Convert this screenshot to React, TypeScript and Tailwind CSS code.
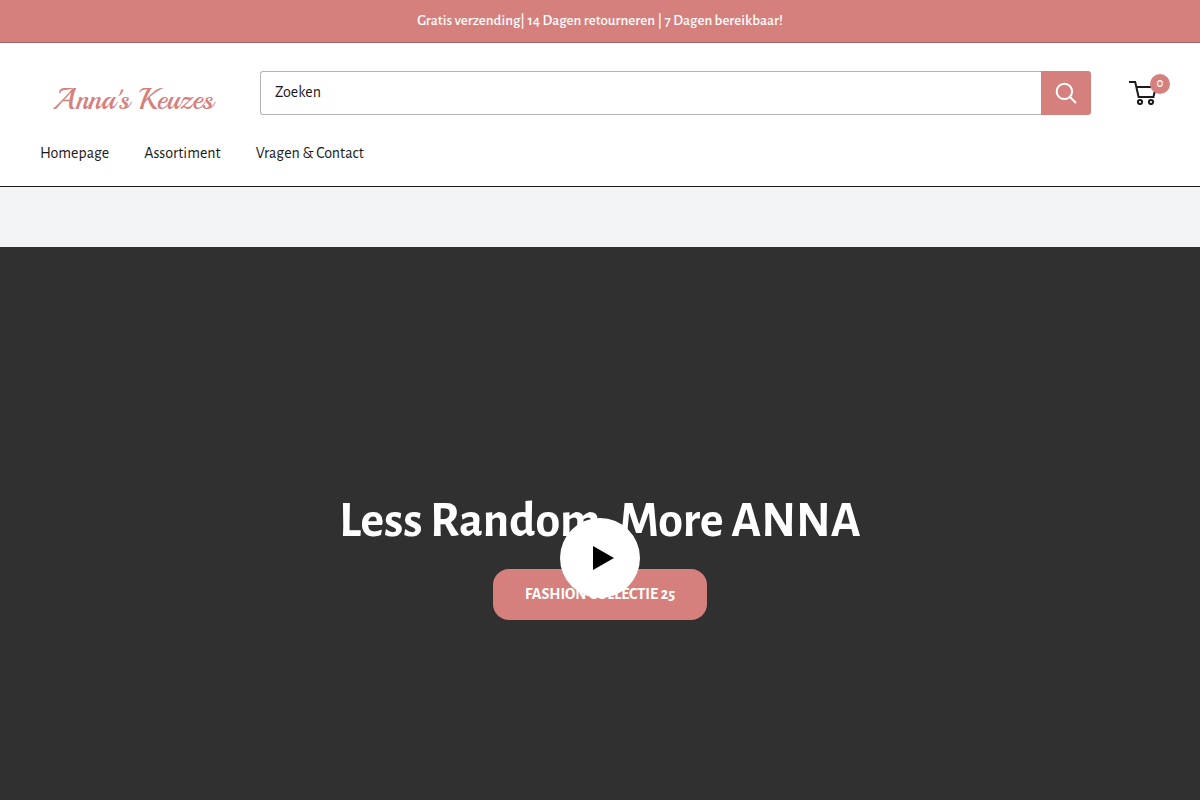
function SearchIcon() {
  return (
    <svg className="size-[22px]" viewBox="0 0 22 22" fill="none" stroke="currentColor" strokeWidth="2" aria-hidden="true">
      <circle cx="9.4" cy="9.4" r="7.7" />
      <path d="M14.9 14.9 L21 21" />
    </svg>
  );
}

function CartIcon() {
  return (
    <svg className="h-6 w-7" viewBox="0 0 28 24" fill="none" stroke="currentColor" strokeWidth="2" aria-hidden="true">
      <path d="M0 1 H6.2 L9.6 16 H24.4 L27 6 H7.5" />
      <circle cx="11" cy="21" r="2.1" />
      <circle cx="22" cy="21" r="2.1" />
    </svg>
  );
}

const links = ["Homepage", "Assortiment", "Vragen & Contact"];

export default function App() {
  return (
    <div className="min-h-screen bg-[#f3f4f6] font-['Alegreya_Sans',Lato,sans-serif] text-[#1c1b1b] oldstyle-nums proportional-nums">
      <div className="border-b border-[#a3636a] bg-[#d6807e] px-10 py-[10px] text-center text-[15px] leading-[22px] font-medium text-white">
        Gratis verzending| 14 Dagen retourneren | 7 Dagen bereikbaar!
      </div>

      <header className="border-b border-[#1c1b1b] bg-white px-10 pt-7 pb-[21px]">
        <div className="flex items-center">
          <a
            href="#"
            className="mr-10 flex h-11 w-[180px] shrink-0 items-end justify-center pl-[6px] font-['Playball','Liberation_Serif',serif] text-[29px] leading-[30px] whitespace-nowrap text-[#d6807e]"
          >
            Anna's Keuzes
          </a>
          <form role="search" className="flex h-11 min-w-0 grow" onSubmit={(e) => e.preventDefault()}>
            <input
              type="search"
              aria-label="Zoeken"
              placeholder="Zoeken"
              className="min-w-0 grow rounded-l-[3px] border border-r-0 border-[#b4b4b4] bg-white px-[14px] pb-[2px] text-base outline-none placeholder:text-[#1c1b1b]"
            />
            <button
              type="submit"
              aria-label="Zoeken"
              className="flex w-[50px] items-center justify-center rounded-r-[3px] bg-[#d6807e] text-white"
            >
              <SearchIcon />
            </button>
          </form>
          <a href="#" aria-label="Winkelwagen" className="relative ml-[38px] mr-[3px]">
            <CartIcon />
            <span className="absolute -top-[7px] left-[21px] flex size-5 items-center justify-center rounded-full bg-[#d6807e] text-[13px] leading-5 font-medium text-white">
              0
            </span>
          </a>
        </div>
        <nav className="mt-[26px] flex gap-[35px] text-base leading-6">
          {links.map((label) => (
            <a key={label} href="#">
              {label}
            </a>
          ))}
        </nav>
      </header>

      <section className="relative mt-[60px] flex min-h-[622px] flex-col items-center justify-center bg-[#303030] px-10 text-center text-white">
        <h1 className="text-[50px] leading-[48px] font-bold">Less Random, More ANNA</h1>
        <a
          href="#"
          className="mt-6 rounded-2xl bg-[#d6807e] px-8 text-base leading-[51px] font-bold"
        >
          FASHION COLLECTIE 25
        </a>
        <button
          type="button"
          aria-label="Video afspelen"
          className="absolute inset-0 m-auto flex size-20 items-center justify-center rounded-full bg-white text-black"
        >
          <svg className="ml-[7px] h-6 w-[21px]" viewBox="0 0 21 24" fill="currentColor" aria-hidden="true">
            <path d="M0 0 L21 12 L0 24 Z" />
          </svg>
        </button>
      </section>
    </div>
  );
}
